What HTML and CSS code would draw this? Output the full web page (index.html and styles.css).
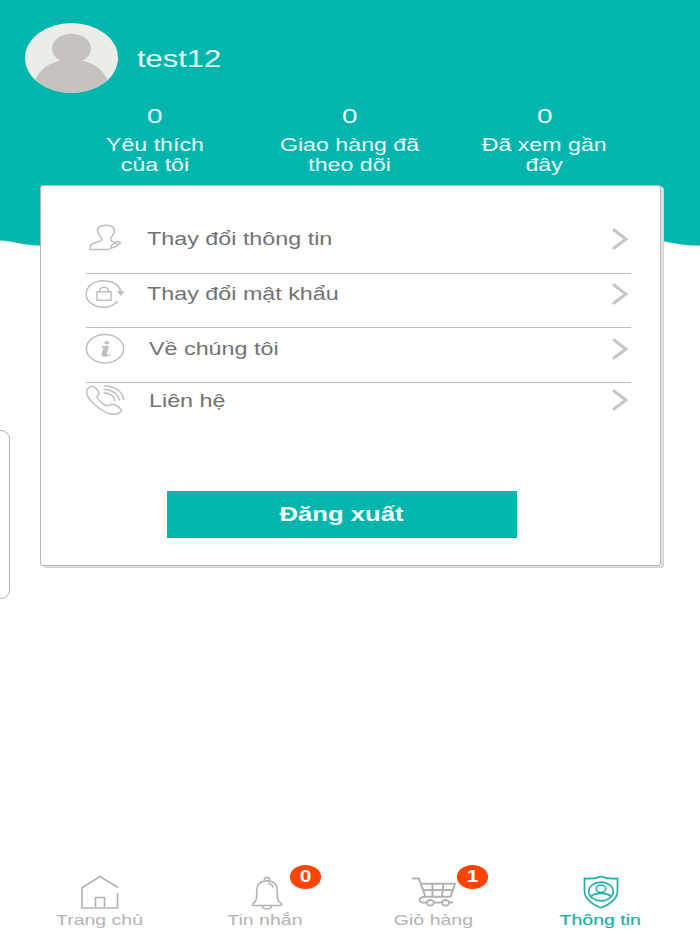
FILE: index.html
```html
<!DOCTYPE html>
<html lang="vi">
<head>
<meta charset="utf-8">
<title>Thông tin</title>
<link rel="stylesheet" href="styles.css">
</head>
<body>
<div class="page">
  <header class="header">
    <svg class="wave" viewBox="0 0 700 8" width="700" height="8"><path d="M0 2.600C14 3 23 7.600 40 7.600V8H0ZM655 2C672 4 680 7.800 700 7.600V8H655Z" fill="#fefefe"/></svg>
    <div class="profile">
      <svg class="avatar" viewBox="0 0 93 70" width="93" height="70">
        <defs><clipPath id="oval"><ellipse cx="46.500" cy="35" rx="46.500" ry="35"/></clipPath></defs>
        <g clip-path="url(#oval)"><path fill="#edede8" d="M0 0h93v70H0z"/><ellipse cx="46.500" cy="25.500" rx="19.500" ry="14.700" fill="#c6c3bf"/><path d="M9 60C14 45 27 36.800 46.500 36.800S78 45 84 60V70H9Z" fill="#c6c3bf"/></g>
      </svg>
      <span class="name">test12</span>
    </div>
    <div class="stats">
      <div class="stat"><b class="count">0</b><span class="label">Yêu thích<br>của tôi</span></div>
      <div class="stat"><b class="count">0</b><span class="label">Giao hàng đã<br>theo dõi</span></div>
      <div class="stat"><b class="count">0</b><span class="label">Đã xem gần<br>đây</span></div>
    </div>
  </header>

  <main class="card">
    <ul class="menu">
      <li class="item item-info">
        <svg class="icon" viewBox="0 0 40 32" width="40" height="32"><path d="M24.500 26.500H4.700C4.500 21.500 7 20.800 12 19.200C17 17.500 18.300 16.500 15.500 13.500C13.500 11.500 13.800 10.500 12.800 9.200C11.500 4.500 15.500 2.200 21 2.200S30.300 4.500 29.300 9.200C28.300 10.500 28.600 11.500 26.800 13.500C24.500 16.500 25.500 18 29.500 19.300M25.500 25.300L27 21.800L31.500 18.700Q34 17.800 35.300 20L31 23.600ZM29.700 19.700L33.300 22.200"/></svg>
        <span class="text">Thay đổi thông tin</span>
        <svg class="chevron" viewBox="0 0 16 22" width="16" height="22"><path d="M2 2L14 11L2 20"/></svg>
      </li>
      <li class="item item-password">
        <svg class="icon" viewBox="0 0 40 32" width="40" height="32"><path d="M36 13.500C33.500 6 26.500 2.700 18.500 2.700C8.500 2.700 1.200 8.500 1.200 16S8.500 29.300 18.500 29.300C25 29.300 29.500 27 32.500 23M12 13.700H26V22.300H12ZM14.500 13.700C14.500 7.800 23.500 7.800 23.500 13.700"/><path class="solid" d="M31.500 13H39.500L36 18Z"/></svg>
        <span class="text">Thay đổi mật khẩu</span>
        <svg class="chevron" viewBox="0 0 16 22" width="16" height="22"><path d="M2 2L14 11L2 20"/></svg>
      </li>
      <li class="item item-about">
        <svg class="icon" viewBox="0 0 40 32" width="40" height="32"><ellipse cx="20" cy="15.700" rx="18.600" ry="14.200"/><ellipse class="solid" cx="21.800" cy="9.800" rx="2.500" ry="1.800"/><path class="solid" d="M16.500 13.300L24 12.700L21.800 21.300Q22.500 21.800 25 20.500V22Q21 24.500 17.500 23.500Q15.800 22.800 16.800 20.500L18.500 14.500H16.500Z"/></svg>
        <span class="text">Về chúng tôi</span>
        <svg class="chevron" viewBox="0 0 16 22" width="16" height="22"><path d="M2 2L14 11L2 20"/></svg>
      </li>
      <li class="item item-contact">
        <svg class="icon" viewBox="0 0 40 32" width="40" height="32"><path d="M2 6C3.500 3.500 6.500 1.500 8.500 2.700C11 4.300 13.500 7 14 9C14.300 11 11.500 11.800 12.200 13.500C14 17 17.500 20 21.500 21.700C24 22.700 25 19.800 28 20.300C30.500 21 34.500 23.500 36.300 25.500C37.500 27.500 34 29 31.500 30C26 31 18.500 28.300 12 22.500C5.500 17.500 0 10.500 2 6Z"/><path d="M19 2C29 1.500 38 7.500 38.800 16M18.700 5.500C26.500 5 33.500 10 34.500 16.700M18.500 9C24.500 9 29 12 30 17"/></svg>
        <span class="text">Liên hệ</span>
        <svg class="chevron" viewBox="0 0 16 22" width="16" height="22"><path d="M2 2L14 11L2 20"/></svg>
      </li>
    </ul>
    <button class="logout"><span>Đăng xuất</span></button>
  </main>

  <div class="edge-handle"></div>

  <nav class="tabs">
    <a class="tab home">
      <svg viewBox="0 0 46 36" width="46" height="36"><path d="M41 13.500L23 2.500L5 13.800V34H40.500V19M18.500 33V23.500H27.500V33" stroke-width="1.600"/></svg>
      <span>Trang chủ</span>
    </a>
    <a class="tab messages">
      <svg viewBox="0 0 46 36" width="46" height="36"><path d="M20.500 6C19.500 2.500 26.500 2.500 25.500 6M10 31.500C7 31.500 9 28.800 11 27.700C14 25 11.500 17 13.700 11.500C17.500 5.300 28.500 5.300 32.300 11.500C34.500 17 32 25 35 27.700C37.500 29.300 39 31.500 36 31.500ZM18.500 32C19 36 27 36 27.500 32M24 9.300Q28 9.800 29.200 13.500" stroke-width="1.600"/></svg>
      <span>Tin nhắn</span><i class="badge">0</i>
    </a>
    <a class="tab basket">
      <svg viewBox="0 0 46 36" width="46" height="36"><path d="M1 4.500H8L14.500 23M10 9.800H44L39.500 22.700H14.500M12 16H41.500M21.500 10V22.500M32.500 10L31 22.500M14.500 22.700C7 23 7 28.500 12 28.500H15M23 28.500H31M37 28.500H42" stroke-width="2"/><ellipse cx="19.300" cy="28.800" rx="3.500" ry="2.800" stroke-width="1.900"/><ellipse cx="34.500" cy="28.800" rx="3.500" ry="2.800" stroke-width="1.900"/></svg>
      <span>Giỏ hàng</span><i class="badge">1</i>
    </a>
    <a class="tab account active">
      <svg viewBox="0 0 46 36" width="46" height="36"><path d="M23 2.500Q31 5.500 39.500 4.300V17C39.500 25 31 31 23 33.800C15 31 6.500 25 6.500 17V4.300Q15 5.500 23 2.500Z" stroke-width="1.700"/><ellipse cx="23" cy="17.500" rx="12.200" ry="9.400" stroke-width="1.600"/><ellipse cx="23" cy="14.800" rx="4.800" ry="3.800" stroke-width="1.600"/><path d="M13 22.700C16 18.300 30 18.300 33 22.700" stroke-width="1.600"/></svg>
      <span>Thông tin</span>
    </a>
  </nav>
</div>
</body>
</html>
```
FILE: styles.css
```css
* { box-sizing: border-box; }
body { margin: 0; background: #fefefe; font-family: "Liberation Sans", Arial, sans-serif; }
svg { display: block; flex: none; }
.page { position: relative; width: 700px; height: 934px; display: flex; flex-direction: column; overflow: hidden; }

.header { position: relative; height: 246px; flex: none; background: #02b6ae; color: #e9fbf9; padding-top: 23px; }
.wave { position: absolute; left: 0; bottom: 0; }
.profile { display: flex; align-items: center; height: 70px; padding-left: 25px; gap: 19px; }
.name { padding-top: 2px; font-size: 23.500px; line-height: 28px; transform: scaleX(1.315); transform-origin: left; }
.stats { display: grid; grid-template-columns: repeat(3, 1fr); margin: 11px 58px 0; }
.stat { display: flex; flex-direction: column; align-items: center; text-align: center; }
.count { font-size: 21px; font-weight: 400; line-height: 24px; transform: scaleX(1.330); }
.label { margin-top: 7px; font-size: 17.500px; line-height: 20px; white-space: nowrap; transform: scaleX(1.325); }

.card { position: relative; flex: none; width: 621px; height: 381px; margin: -61px 0 0 40px; padding: 20px 29px 0 45px; background: #fefefe; border: 1px solid #b4b8b8; border-radius: 3px; box-shadow: 2px 1px 0 #e2e4e4, 3px 2px 0 #cfd1d1; }
.menu { list-style: none; margin: 0; padding: 0; }
.item { display: flex; align-items: center; border-bottom: 1px solid #bdbdbd; }
.item-info { height: 68px; padding-bottom: 1px; }
.item-password { height: 54px; padding-bottom: 13px; }
.item-about { height: 55px; padding-bottom: 12px; }
.item-contact { height: 36px; padding-bottom: 2px; border-bottom: 0; }
.item-contact .text { padding-top: 1px; }
.icon { fill: none; stroke: #bfbfbf; stroke-width: 1.500; margin-left: -1px; }
.icon .solid { fill: #bfbfbf; stroke: none; }
.text { flex: 1; margin-left: 22px; font-size: 18px; line-height: 22px; color: #737373; white-space: nowrap; transform: scaleX(1.295); transform-origin: left; }
.item-about .text, .item-contact .text { margin-left: 24px; }
.chevron { fill: none; stroke: #c6c6ca; stroke-width: 3; stroke-linecap: round; margin-right: 3px; }
.logout { display: flex; align-items: center; justify-content: center; width: 350px; height: 47px; margin: 72px 0 0 81px; padding: 0 0 1px; border: 0; background: #02b6ae; color: #f4fffe; font: bold 20.500px "Liberation Sans", Arial, sans-serif; }
.logout span { transform: scaleX(1.250); }

.edge-handle { position: absolute; left: -20px; top: 430px; width: 30px; height: 169px; border: 1px solid #b5b5b5; border-radius: 9px; }

.tabs { display: grid; grid-template-columns: repeat(4, 167px); margin: auto 0 0 16px; height: 60px; }
.tab { position: relative; display: flex; flex-direction: column; align-items: center; color: #b3b3b3; }
.tab svg { fill: none; stroke: currentColor; }
.tab span { font-size: 15px; line-height: 19px; white-space: nowrap; transform: scaleX(1.300); }
.messages span { margin-left: -3px; }
.tab.active { color: #22aea8; }
.tab.active span { -webkit-text-stroke: 0.200px currentColor; }
.badge { position: absolute; left: 113px; top: -9px; width: 24px; height: 24px; border-radius: 50%; background: #fb4406; color: #fff; font: bold 16px/24px "Liberation Sans", Arial, sans-serif; text-align: center; transform: translateX(-2.500px) scaleX(1.300); }
```
